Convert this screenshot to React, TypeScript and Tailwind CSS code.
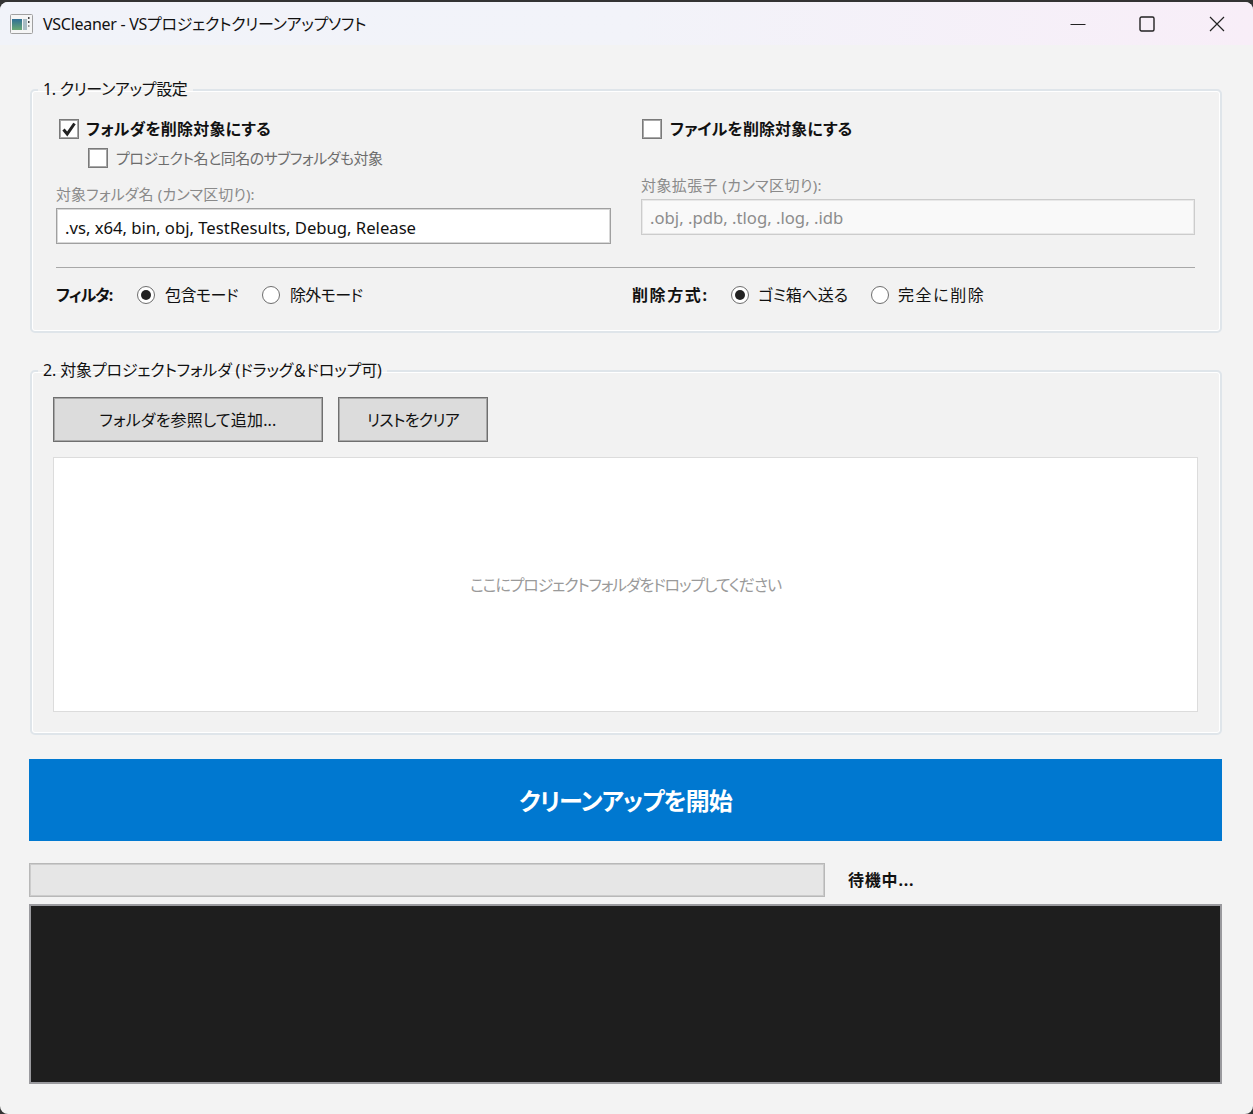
import React from "react";

const font = { fontFamily: '"Noto Sans", "Noto Sans CJK JP", sans-serif' };

function Check({ checked = false, className = "" }: { checked?: boolean; className?: string }) {
  return (
    <span className={`flex h-5 w-5 shrink-0 items-center justify-center border border-[#7a7a7a] bg-white shadow-[inset_0_0_0_1px_#a8a8a8] ${className}`}>
      {checked && (
        <svg width="16" height="16" viewBox="0 0 16 16" fill="none">
          <path d="M2.5 8.5 L6.2 13 L13.5 2.5" stroke="#222" strokeWidth="3" />
        </svg>
      )}
    </span>
  );
}

function Radio({ checked = false }: { checked?: boolean }) {
  return (
    <span className="flex h-[18px] w-[18px] shrink-0 items-center justify-center rounded-full border-[1.5px] border-[#6e6e6e] bg-white">
      {checked && <span className="h-[10px] w-[10px] rounded-full bg-[#222]" />}
    </span>
  );
}

function Legend({ children, className = "" }: { children: React.ReactNode; className?: string }) {
  return <legend className={`ml-[6px] -translate-y-px px-[5px] text-[16px] leading-[22px] text-[#111] ${className}`}>{children}</legend>;
}

export default function App() {
  return (
    <div className="flex h-[1114px] w-[1253px] flex-col overflow-hidden bg-[#333] [font-feature-settings:'palt']" style={font}>
      <div className="mt-[2px] flex min-h-0 flex-1 flex-col rounded-t-[8px] rounded-b-[8px] bg-[#f3f3f3]">
        <header className="flex h-[43px] shrink-0 items-center rounded-t-[8px] bg-gradient-to-r from-[#f1f3f9] via-[#f2f3f9] to-[#f8eef8] pl-[10px]">
          <svg width="24" height="20" viewBox="0 0 24 20" className="mr-[9px] shrink-0">
            <defs>
              <linearGradient id="pane" x1="0" y1="0" x2="0" y2="1">
                <stop offset="0" stopColor="#2f6f96" />
                <stop offset="1" stopColor="#6aa873" />
              </linearGradient>
            </defs>
            <rect x="0.5" y="0.5" width="22" height="19" rx="1" fill="#f5f5f5" stroke="#a0a0a0" />
            <rect x="2" y="5" width="10" height="11" fill="url(#pane)" />
            <rect x="13" y="5" width="4" height="11" fill="#a9bcc4" />
            <rect x="18" y="3" width="1.5" height="2" fill="#444" />
            <rect x="18" y="7" width="1.5" height="2" fill="#444" />
            <rect x="18" y="11" width="1.5" height="2" fill="#999" />
          </svg>
          <span className="text-[16px] tracking-[-0.28px] text-[#111]">VSCleaner - VSプロジェクトクリーンアップソフト</span>
          <div className="ml-auto flex h-full items-center">
            <svg width="16" height="16" viewBox="0 0 16 16" className="mr-[53px]"><path d="M0.5 8.5 H15.5" stroke="#222" strokeWidth="1" /></svg>
            <svg width="16" height="16" viewBox="0 0 16 16" className="mr-[54px]"><rect x="1" y="1" width="14" height="14" rx="1.5" fill="none" stroke="#222" strokeWidth="1.4" /></svg>
            <svg width="16" height="16" viewBox="0 0 16 16" className="mr-[28px]"><path d="M1 1 L15 15 M15 1 L1 15" stroke="#222" strokeWidth="1.2" /></svg>
          </div>
        </header>

        <main className="flex flex-1 flex-col px-[29px]">
          <fieldset className="ml-[1px] mr-[2px] mt-[34px] h-[254px] rounded-[5px] border-2 border-[#dfe5ea] bg-[#f2f2f2] shadow-[inset_0_0_0_1px_#ffffff]">
            <Legend className="tracking-[-0.33px]">1. クリーンアップ設定</Legend>
            <div className="grid grid-cols-[555px_554px] gap-x-[30px] pl-[24px] pt-[18px]">
              <div className="flex flex-col">
                <label className="ml-[3px] flex h-[20px] items-center gap-[7px] text-[16px] font-bold tracking-[0.18px] text-[#111]">
                  <Check checked />フォルダを削除対象にする
                </label>
                <label className="ml-[32px] mt-[9px] flex h-[20px] items-center gap-[8px] text-[15px] tracking-[-0.5px] text-[#6d6d6d]">
                  <Check />プロジェクト名と同名のサブフォルダも対象
                </label>
                <span className="mt-[15px] text-[15px] leading-[22px] tracking-[0.1px] text-[#8a8a8a]">対象フォルダ名 (カンマ区切り):</span>
                <div className="mt-[3px] flex h-[36px] items-center border border-[#a0a0a0] bg-white pl-[8px] pt-[3px] text-[16.7px] tracking-[-0.02px] text-[#111] shadow-[inset_0_0_0_1px_#d8d8d8]">.vs, x64, bin, obj, TestResults, Debug, Release</div>
              </div>
              <div className="flex flex-col">
                <label className="ml-[1px] flex h-[20px] items-center gap-[8px] text-[16px] font-bold tracking-[0.1px] text-[#111]">
                  <Check />ファイルを削除対象にする
                </label>
                <span className="mt-[35px] text-[15px] leading-[22px] tracking-[0.4px] text-[#8a8a8a]">対象拡張子 (カンマ区切り):</span>
                <div className="mt-[3px] flex h-[36px] items-center border border-[#cccccc] bg-[#f9f9f9] pl-[8px] pt-[2px] text-[16.7px] text-[#8c8c8c] shadow-[inset_0_0_0_1px_#e8e8e8]">.obj, .pdb, .tlog, .log, .idb</div>
              </div>
            </div>
            <div className="ml-[24px] mr-[25px] mt-[23px] h-px bg-[#a8a8a8]" />
            <div className="flex h-[54px] items-center pl-[24px] text-[16px] text-[#111]">
              <span className="w-[81px] font-bold tracking-[-1px]">フィルタ:</span>
              <Radio checked /><span className="ml-[10px] w-[97px] whitespace-nowrap tracking-[-0.55px]">包含モード</span>
              <Radio /><span className="ml-[10px] w-[342px] whitespace-nowrap tracking-[-0.65px]">除外モード</span>
              <span className="w-[99px] whitespace-nowrap font-bold tracking-[1.6px]">削除方式:</span>
              <Radio checked /><span className="ml-[9px] w-[113px] whitespace-nowrap tracking-[-0.15px]">ゴミ箱へ送る</span>
              <Radio /><span className="ml-[9px] whitespace-nowrap tracking-[1.6px]">完全に削除</span>
            </div>
          </fieldset>

          <fieldset className="ml-[1px] mr-[2px] mt-[27px] h-[375px] rounded-[5px] border-2 border-[#dfe5ea] bg-[#f2f2f2] shadow-[inset_0_0_0_1px_#ffffff]">
            <Legend className="tracking-[-0.15px]">2. 対象プロジェクトフォルダ (ドラッグ＆ドロップ可)</Legend>
            <div className="flex gap-[15px] pl-[21px] pt-[15px]">
              <button className="h-[45px] w-[270px] border border-[#6f6f6f] bg-[#dcdcdc] text-[16px] tracking-[0.15px] text-[#111] shadow-[inset_0_0_0_1px_#a8a8a8]">フォルダを参照して追加...</button>
              <button className="h-[45px] w-[150px] border border-[#6f6f6f] bg-[#dcdcdc] text-[16px] tracking-[-0.7px] text-[#111] shadow-[inset_0_0_0_1px_#a8a8a8]">リストをクリア</button>
            </div>
            <div className="ml-[21px] mt-[15px] flex h-[255px] w-[1145px] items-center justify-center border border-[#dcdcdc] bg-white pt-[1px] text-[16px] tracking-[-1.15px] text-[#9a9a9a]">ここにプロジェクトフォルダをドロップしてください</div>
          </fieldset>

          <button className="mt-[24px] flex h-[82px] w-[1193px] shrink-0 items-center justify-center bg-[#0078d0] pt-[2px] text-[24px] font-bold tracking-[-0.9px] text-white">クリーンアップを開始</button>

          <div className="mt-[22px] flex h-[34px] items-center">
            <div className="h-[34px] w-[796px] border border-[#b8b8b8] bg-[#e6e6e6] shadow-[inset_0_0_0_1px_#cccccc]" />
            <span className="ml-[23px] text-[16px] font-bold tracking-[0.8px] text-[#111]">待機中...</span>
          </div>
          <div className="mt-[7px] h-[180px] w-[1193px] border-2 border-[#9a9a9e] bg-[#1e1e1e]" />
        </main>
      </div>
    </div>
  );
}
